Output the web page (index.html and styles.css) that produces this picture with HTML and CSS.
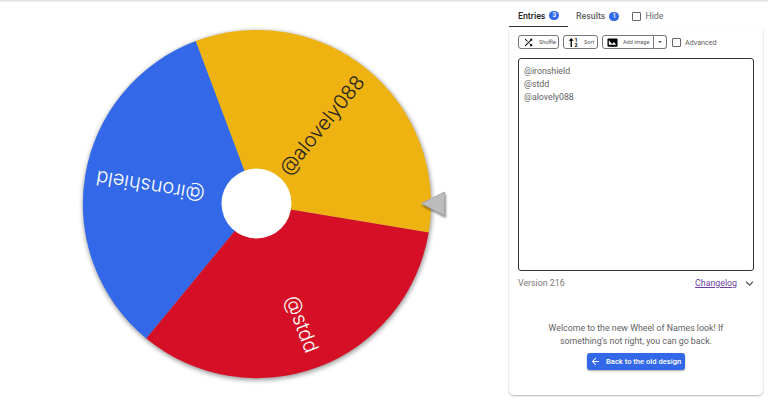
FILE: index.html
```html
<!DOCTYPE html>
<html lang="en">
<head>
    <meta charset="UTF-8">
    <meta name="viewport" content="width=device-width, initial-scale=1.0">
    <title>Wheel of Names</title>
    <link rel="stylesheet" href="styles.css">
</head>
<body>
    <div class="topline"></div>
    <main class="page">
        <section class="wheel-area">
            <svg class="wheel" width="508" height="402" viewBox="0 0 508 402">
                <circle class="wheel-shadow" cx="257.5" cy="205.5" r="175"/>
                <path fill="#3369e8" d="M257 204 L195.8 41.1 A174 174 0 0 0 146.3 338.4 Z"/>
                <path fill="#eeb211" d="M257 204 L195.8 41.1 A174 174 0 0 1 428.7 232.4 Z"/>
                <path fill="#d50f25" d="M257 204 L428.7 232.4 A174 174 0 0 1 146.3 338.4 Z"/>
                <g class="wheel-label">
                    <text fill="#222" transform="translate(257 204) rotate(-50.6)" x="163" y="7">@alovely088</text>
                    <text fill="#fff" transform="translate(257 204) rotate(69.4)" x="158" y="7">@stdd</text>
                    <text fill="#fff" transform="translate(257 204) rotate(189.4)" x="163" y="7">@ironshield</text>
                </g>
                <circle fill="#fff" cx="256.5" cy="203.5" r="35"/>
                <path class="pointer" d="M421.5 203.5 L444.5 192 L444.5 215.5 Z"/>
            </svg>
        </section>

        <aside class="side">
            <nav class="tabs">
                <div class="tab tab-active">Entries <span class="badge">3</span></div>
                <div class="tab tab-results">Results <span class="badge">1</span></div>
                <label class="check tab-hide"><span class="box"></span>Hide</label>
            </nav>

            <div class="card">
                <div class="toolbar">
                    <button class="btn btn-shuffle" type="button">
                        <svg viewBox="0 0 24 24" width="11" height="11"><path d="M10.59 9.17L5.41 4 4 5.41l5.17 5.17 1.42-1.41zM14.5 4l2.04 2.04L4 18.59 5.41 20 17.96 7.46 20 9.5V4h-5.5zm.33 9.41l-1.41 1.41 3.13 3.13L14.5 20H20v-5.5l-2.04 2.04-3.13-3.13z"/></svg>
                        Shuffle
                    </button>
                    <button class="btn btn-sort" type="button">
                        <svg viewBox="0 0 24 24" width="11" height="11"><path d="M7 2 L1.5 8 L5.5 8 L5.5 22 L8.5 22 L8.5 8 L12.5 8 Z"/><text class="sort-digit" x="14" y="11">1</text><text class="sort-digit" x="14" y="22">2</text></svg>
                        Sort
                    </button>
                    <div class="btn-group">
                        <button class="btn btn-main" type="button">
                            <svg viewBox="0 0 24 24" width="11" height="11"><path fill-rule="evenodd" d="M3 3h18a2 2 0 0 1 2 2v14a2 2 0 0 1-2 2H3a2 2 0 0 1-2-2V5a2 2 0 0 1 2-2zM4 7v10h16l-5-6-4 4.5-2.5-3z"/></svg>
                            Add image
                        </button>
                        <button class="btn btn-caret" type="button"><span class="caret"></span></button>
                    </div>
                    <label class="check check-adv"><span class="box"></span>Advanced</label>
                </div>

                <div class="entries">
                    <div>@ironshield</div>
                    <div>@stdd</div>
                    <div>@alovely088</div>
                </div>

                <div class="version-row">
                    <span>Version 216</span>
                    <a class="changelog" href="#">Changelog</a>
                    <svg class="chevron" viewBox="0 0 24 24" width="15" height="15"><path fill="#555" d="M16.59 8.59L12 13.17 7.41 8.59 6 10l6 6 6-6z"/></svg>
                </div>

                <div class="welcome">
                    <p>Welcome to the new Wheel of Names look! If<br>something's not right, you can go back.</p>
                    <button class="back-btn" type="button">
                        <svg viewBox="0 0 24 24" width="11" height="11"><path fill="#fff" d="M20 11H7.83l5.59-5.59L12 4l-8 8 8 8 1.41-1.41L7.83 13H20v-2z"/></svg>
                        Back to the old design
                    </button>
                </div>
            </div>
        </aside>
    </main>
</body>
</html>
```

FILE: styles.css
```css
* {
    box-sizing: border-box;
}
html, body {
    margin: 0;
    height: 402px;
    overflow: hidden;
}
body {
    font-family: 'Roboto', 'Liberation Sans', sans-serif;
    background-color: #fff;
    color: #5f5f5f;
}
.topline {
    height: 2px;
    background: linear-gradient(#dcdcdc, #f4f4f4);
}
.page {
    display: flex;
    height: 400px;
}
.wheel-area {
    width: 509px;
    margin-top: -2px;
    flex-shrink: 0;
}
.wheel {
    display: block;
}
.wheel-shadow {
    fill: #a0a0a0;
    filter: blur(2px);
}
.wheel-label text {
    font-family: 'Inter', 'Lato', sans-serif;
    font-size: 20px;
    font-weight: 300;
    text-anchor: end;
}
.pointer {
    fill: #bcbcbc;
    stroke: #a9a9a9;
    stroke-width: 1;
    filter: drop-shadow(1px 2px 1px rgba(0, 0, 0, 0.45));
}

.side {
    width: 254px;
    display: flex;
    flex-direction: column;
}
.tabs {
    display: flex;
    align-items: center;
    height: 25px;
    font-size: 8.8px;
    font-weight: 500;
    color: #666;
}
.tab {
    height: 25px;
    padding: 3px 0 0 9px;
    display: flex;
    align-items: center;
    gap: 4px;
}
.tab-active {
    color: #222;
    border-bottom: 1px solid #333;
    width: 59px;
}
.tab-results {
    padding-left: 8px;
}
.badge {
    width: 10px;
    height: 9px;
    border-radius: 5px;
    background-color: #3369e8;
    color: #fff;
    font-size: 6.5px;
    line-height: 9px;
    text-align: center;
}
.check {
    display: flex;
    align-items: center;
    font-weight: 400;
}
.box {
    width: 9px;
    height: 9px;
    border: 1px solid #666;
    border-radius: 1px;
    background-color: #fff;
}
.tab-hide {
    margin: 3px 0 0 13px;
    gap: 4px;
}
.card {
    height: 368px;
    padding: 8px 9px 0;
    background-color: #fff;
    border-radius: 5px;
    box-shadow: 0 1px 2px rgba(0, 0, 0, 0.3);
}
.toolbar {
    display: flex;
    align-items: center;
    height: 14px;
    gap: 4px;
}
.btn {
    height: 14px;
    padding: 0 0 0 4px;
    margin: 0;
    display: flex;
    align-items: center;
    gap: 5px;
    background-color: #fff;
    border: 1px solid #777;
    border-radius: 3px;
    font-family: inherit;
    font-size: 5.5px;
    color: #555;
    white-space: nowrap;
}
.btn-shuffle {
    width: 41px;
}
.btn-sort {
    width: 35px;
}
.sort-digit {
    font-size: 12px;
    font-weight: 700;
}
.btn-group {
    display: flex;
}
.btn-main {
    width: 52px;
    border-radius: 3px 0 0 3px;
}
.btn-caret {
    width: 13px;
    padding: 0;
    justify-content: center;
    border-left: 0;
    border-radius: 0 3px 3px 0;
}
.caret {
    border-left: 2px solid transparent;
    border-right: 2px solid transparent;
    border-top: 2px solid #555;
}
.check-adv {
    font-size: 7.2px;
    gap: 4px;
    margin-left: 1px;
}
.entries {
    height: 213px;
    margin-top: 9px;
    padding: 6px 5px;
    border: 1.5px solid #333;
    border-radius: 3px;
    font-size: 8.8px;
    line-height: 13px;
}
.version-row {
    display: flex;
    align-items: center;
    height: 16px;
    margin-top: 4px;
    font-size: 8.8px;
    color: #777;
}
.changelog {
    margin-left: auto;
    margin-right: 5px;
    color: #6a3fa0;
}
.chevron {
    margin-right: -3px;
}
.welcome {
    margin-top: 31px;
    text-align: center;
    font-size: 8.8px;
    line-height: 13px;
}
.welcome p {
    margin: 0;
}
.back-btn {
    margin: 5px auto 0;
    width: 98px;
    height: 17px;
    padding: 0 0 0 3px;
    display: flex;
    align-items: center;
    gap: 5px;
    border: 0;
    border-radius: 3px;
    background-color: #3369e8;
    box-shadow: 0 1px 2px rgba(0, 0, 0, 0.35);
    color: #fff;
    font-family: inherit;
    font-size: 7.6px;
    font-weight: 500;
    white-space: nowrap;
}
```
